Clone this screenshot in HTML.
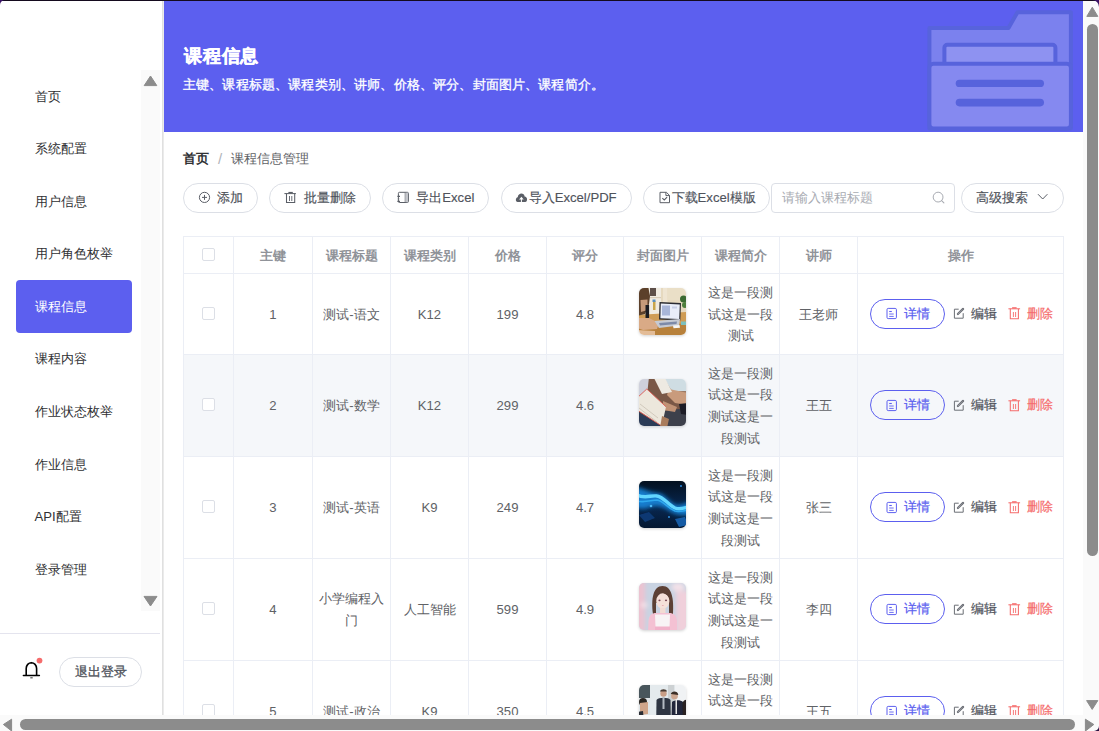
<!DOCTYPE html>
<html><head><meta charset="utf-8">
<style>
*{box-sizing:border-box;margin:0;padding:0}
html,body{width:1099px;height:731px;overflow:hidden;background:#fff}
body{font-family:"Liberation Sans",sans-serif;position:relative;color:#606266;font-size:13.125px}
.a{position:absolute}
.menu{left:34.5px;font-size:13.125px;color:#303133;line-height:20px;white-space:nowrap}
.btn{top:183px;height:30px;border:1px solid #dcdfe6;border-radius:15px;background:#fff;font-size:13.125px;color:#4f535b;white-space:nowrap;font-weight:500}
.btn svg{position:absolute}
.btn span{position:absolute;top:4px;line-height:20px;-webkit-text-stroke:0.15px #4f535b}
.hl{height:1px;background:#ebeef5}
.vl{width:1px;background:#ebeef5}
.c{display:flex;align-items:center;justify-content:center;text-align:center;font-size:13.125px;color:#606266;line-height:21.6px}
.th{font-weight:bold;color:#909399}
.cb{position:absolute;width:13px;height:13px;border:1px solid #dcdfe6;border-radius:2px;background:#fff}
.thumb{position:absolute;width:47px;height:47px;border-radius:5px;overflow:hidden;box-shadow:0 1px 3px rgba(0,0,0,.18)}
.dt{position:absolute;width:75px;height:30px;border:1px solid #5c5fef;border-radius:15px;color:#5c5fef;font-weight:500}
.ops{position:absolute;font-size:13.125px;line-height:20px;white-space:nowrap;-webkit-text-stroke:0.2px currentColor}
</style></head><body>

<div class="a" style="left:141px;top:70px;width:19px;height:541px;background:#fafafa"></div>
<svg class="a" style="left:141px;top:70px" width="19" height="541"><path d="M150.5,76 L156.8,85.6 L144.2,85.6Z" transform="translate(-141,-70)" fill="#8c8c8c" stroke="#8c8c8c" stroke-width="1" stroke-linejoin="round"/><path d="M144,596.4 L157,596.4 L150.5,606Z" transform="translate(-141,-70)" fill="#8c8c8c" stroke="#8c8c8c" stroke-width="1" stroke-linejoin="round"/></svg>
<div class="a" style="left:16px;top:280px;width:116px;height:53px;background:#5c5fef;border-radius:4px"></div>
<div class="a menu" style="top:86.50px">首页</div>
<div class="a menu" style="top:139.08px">系统配置</div>
<div class="a menu" style="top:191.66px">用户信息</div>
<div class="a menu" style="top:244.24px">用户角色枚举</div>
<div class="a menu" style="top:296.82px;color:#fff">课程信息</div>
<div class="a menu" style="top:349.40px">课程内容</div>
<div class="a menu" style="top:401.98px">作业状态枚举</div>
<div class="a menu" style="top:454.56px">作业信息</div>
<div class="a menu" style="top:507.14px">API配置</div>
<div class="a menu" style="top:559.72px">登录管理</div>
<div class="a" style="left:0;top:633px;width:160px;height:1px;background:#e4e4ee"></div>
<svg class="a" style="left:20px;top:656px" width="26" height="26" viewBox="20 656 26 26"><path d="M26.2,675.2 L26.2,668.5 A5,5.6 0 0 1 36.6,668.5 L36.6,675.2" fill="none" stroke="#000" stroke-width="1.6"/><path d="M23.4,675.6 L39.4,675.6" stroke="#000" stroke-width="1.5" stroke-linecap="round"/><path d="M30.2,663.4 L31.4,661.8 L32.6,663.4Z" fill="#000"/><rect x="30.3" y="677" width="2.4" height="1.5" fill="#777"/><circle cx="39.5" cy="660.6" r="2.9" fill="#f56c6c"/></svg>
<div class="a" style="left:59px;top:657px;width:83px;height:30px;border:1px solid #dcdfe6;border-radius:15px;font-size:13.125px;color:#4f535b;line-height:28px;text-align:center;-webkit-text-stroke:0.3px #4f535b">退出登录</div>
<div class="a" style="left:162px;top:0;width:1px;height:731px;background:#e0e0e0"></div>
<div class="a" style="left:163px;top:0;width:1px;height:731px;background:#ebebeb"></div>
<div class="a" style="left:164px;top:0;width:919px;height:132px;background:#5c5fef"></div>
<svg class="a" style="left:920px;top:0" width="163" height="132" viewBox="920 0 163 132">
<g stroke="#5763dc" stroke-width="4" stroke-linejoin="round">
<path d="M929.4,128.5 V28 H1008.5 L1017.5,12.2 H1070.9 V128.5 Z" fill="#7b81ee"/>
<rect x="944.4" y="44.8" width="111" height="22" rx="3" fill="#8e92f1"/>
<rect x="929.4" y="63.8" width="141.5" height="64.7" rx="4" fill="#8589f0"/>
</g>
<rect x="955.7" y="79.7" width="88.3" height="7.4" rx="3.7" fill="#5763dc"/>
<rect x="955.7" y="98.8" width="88.3" height="7.6" rx="3.8" fill="#5763dc"/>
</svg>
<div class="a" style="left:184px;top:43px;font-size:18.25px;letter-spacing:0.75px;font-weight:bold;color:#fff;line-height:26px;white-space:nowrap;-webkit-text-stroke:0.45px #fff">课程信息</div>
<div class="a" style="left:183px;top:75px;font-size:13.125px;letter-spacing:0.16px;color:#fff;-webkit-text-stroke:0.32px #fff;line-height:20px;white-space:nowrap">主键、课程标题、课程类别、讲师、价格、评分、封面图片、课程简介。</div>
<div class="a" style="left:183px;top:148px;font-size:13.125px;line-height:20px;white-space:nowrap"><b style="color:#303133">首页</b><span style="color:#b1b4ba;margin:0 8.5px 0 9px;font-size:15px;position:relative;top:0.5px">/</span><span>课程信息管理</span></div>
<div class="a btn" style="left:182.7px;width:75.2px"><span style="left:33.6px">添加</span></div>
<div class="a btn" style="left:269.2px;width:101.5px"><span style="left:33.5px">批量删除</span></div>
<div class="a btn" style="left:382.3px;width:106.4px"><span style="left:33.0px">导出Excel</span></div>
<div class="a btn" style="left:500.5px;width:131.1px"><span style="left:27.2px">导入Excel/PDF</span></div>
<div class="a btn" style="left:643.2px;width:127.1px"><span style="left:27.4px">下载Excel模版</span></div>
<div class="a" style="left:771px;top:183px;width:183.5px;height:29.5px;border:1px solid #dcdfe6;border-radius:4px;background:#fff"></div>
<div class="a" style="left:781.5px;top:187.6px;font-size:13.125px;line-height:20px;color:#a8abb2;white-space:nowrap">请输入课程标题</div>
<div class="a btn" style="left:961px;width:103px"><span style="left:14px">高级搜索</span></div>
<svg class="a" style="left:0;top:0" width="1099" height="731">
<g fill="none" stroke="#5a5e66">
<circle cx="204.5" cy="197.4" r="5.1" stroke-width="1"/>
<path d="M202,197.4h5M204.5,194.9v5" stroke-width="1"/>
<path d="M284.4,193.6h11.5" stroke-width="1"/>
<path d="M288.4,192.6h4.4" stroke-width="1.4"/>
<path d="M286.5,193.6v8.9h8.2v-8.9" stroke-width="1.05"/>
<path d="M289.5,196v5M291.8,196v5" stroke-width="0.9"/>
<rect x="398.4" y="192.3" width="10" height="10.2" rx="1" stroke-width="1"/>
<path d="M405.2,192.6v9.6" stroke-width="0.8"/>
<path d="M397.4,196.4h2.6M397.4,201.4h2.6" stroke-width="1.2"/>
<path d="M397.6,198.9h2" stroke-width="0.7" stroke-opacity=".6"/>
<path d="M660,192.3h6.4l3.1,3.1v7.3h-9.5Z" stroke-width="1" stroke-linejoin="round"/>
<path d="M665.9,192.4v3.2h3.5" stroke-width="1"/>
<path d="M662.3,198.2l2,1.8l2.8,-2.8" stroke-width="1.1"/>
<path d="M1038,194.2l4.7,4.8l4.7,-4.8" stroke-width="1"/>
</g>
<rect x="405.6" y="192.8" width="2.4" height="9.4" fill="#c4c6cb"/>
<path d="M517.6,202 C515.3,202 515.3,197.6 517.7,197.2 C518.2,192.6 524.2,192.4 524.6,196.4 C527.8,196.5 527.8,202 525.2,202Z" fill="#5a5e66"/>
<path d="M521.4,202.2v-3.4" stroke="#fff" stroke-width="1"/>
<path d="M521.4,196.8l-2.3,2.6h4.6Z" fill="#fff"/>
<circle cx="938.1" cy="197.1" r="4.9" fill="none" stroke="#a8abb2" stroke-width="1"/>
<path d="M941.6,200.6l2.3,2.2" stroke="#a8abb2" stroke-width="1.1" stroke-linecap="round"/>
</svg>
<div class="a" style="left:184px;top:355px;width:879px;height:101px;background:#f5f7fa"></div>
<div class="a hl" style="left:183px;top:236px;width:881px"></div>
<div class="a hl" style="left:183px;top:273px;width:881px"></div>
<div class="a hl" style="left:183px;top:354px;width:881px"></div>
<div class="a hl" style="left:183px;top:456px;width:881px"></div>
<div class="a hl" style="left:183px;top:558px;width:881px"></div>
<div class="a hl" style="left:183px;top:660px;width:881px"></div>
<div class="a hl" style="left:183px;top:762px;width:881px"></div>
<div class="a vl" style="left:183px;top:236px;height:500px"></div>
<div class="a vl" style="left:233px;top:236px;height:500px"></div>
<div class="a vl" style="left:312px;top:236px;height:500px"></div>
<div class="a vl" style="left:390px;top:236px;height:500px"></div>
<div class="a vl" style="left:468px;top:236px;height:500px"></div>
<div class="a vl" style="left:546px;top:236px;height:500px"></div>
<div class="a vl" style="left:623px;top:236px;height:500px"></div>
<div class="a vl" style="left:701px;top:236px;height:500px"></div>
<div class="a vl" style="left:779px;top:236px;height:500px"></div>
<div class="a vl" style="left:857px;top:236px;height:500px"></div>
<div class="a vl" style="left:1063px;top:236px;height:500px"></div>
<div class="cb" style="left:202px;top:248px"></div>
<div class="a c th" style="left:234px;top:238px;width:78px;height:36px">主键</div>
<div class="a c th" style="left:313px;top:238px;width:77px;height:36px">课程标题</div>
<div class="a c th" style="left:391px;top:238px;width:77px;height:36px">课程类别</div>
<div class="a c th" style="left:469px;top:238px;width:77px;height:36px">价格</div>
<div class="a c th" style="left:547px;top:238px;width:76px;height:36px">评分</div>
<div class="a c th" style="left:624px;top:238px;width:77px;height:36px">封面图片</div>
<div class="a c th" style="left:702px;top:238px;width:77px;height:36px">课程简介</div>
<div class="a c th" style="left:780px;top:238px;width:77px;height:36px">讲师</div>
<div class="a c th" style="left:858px;top:238px;width:205px;height:36px">操作</div>
<div class="cb" style="left:202px;top:306.9px"></div>
<div class="a c" style="left:234px;top:274.5px;width:78px;height:80px">1</div>
<div class="a c" style="left:313px;top:274.5px;width:77px;height:80px">测试-语文</div>
<div class="a c" style="left:391px;top:274.5px;width:77px;height:80px">K12</div>
<div class="a c" style="left:469px;top:274.5px;width:77px;height:80px">199</div>
<div class="a c" style="left:547px;top:274.5px;width:76px;height:80px">4.8</div>
<div class="a c" style="left:702px;top:274.5px;width:77px;height:80px">这是一段测<br>试这是一段<br>测试</div>
<div class="a c" style="left:780px;top:274.5px;width:77px;height:80px">王老师</div>
<div class="thumb" style="left:639px;top:287.8px"><svg width="47" height="47" viewBox="0 0 47 47"><defs><filter id="b1" x="-10%" y="-10%" width="120%" height="120%"><feGaussianBlur stdDeviation="0.6"/></filter></defs><g filter="url(#b1)">
<rect x="-2" y="-2" width="51" height="51" fill="#e6d9bf"/>
<rect x="10" y="-2" width="12" height="29" fill="#f0ebe1"/>
<rect x="11" y="-2" width="6" height="10" fill="#5d5048"/>
<rect x="10" y="9" width="12" height="1.2" fill="#d6cbb8"/>
<rect x="14" y="13" width="2.5" height="9" fill="#c9a54c"/>
<rect x="13.5" y="11.5" width="3" height="2.5" fill="#5a8fc0"/>
<rect x="24" y="-2" width="4.5" height="24" fill="#efe5d2"/>
<rect x="29" y="-2" width="18" height="14" fill="#eadfc7"/>
<path d="M-2,27 L47,24 L49,49 L-2,49Z" fill="#cf9c55"/>
<path d="M-2,40 L49,35 L49,49 L-2,49Z" fill="#b8813b"/>
<path d="M-2,-2 L9,-2 L11,8 L10,16 L6,26 L-2,28Z" fill="#5b3f2b"/>
<path d="M1.5,12 L8.5,11.5 L8.5,22 L2,24Z" fill="#c69a7a"/>
<rect x="6.5" y="17" width="3.6" height="13" fill="#1f1f22"/>
<path d="M-2,30 L10,30 L20,35 L18,41 L4,42 L-2,40Z" fill="#d9aa86"/>
<path d="M-2,42 L16,43 L16,49 L-2,49Z" fill="#e3bc97"/>
<path d="M20.5,14 L42,15 L41.3,32.5 L20,31.5Z" fill="#2c2c30"/>
<path d="M21.8,15.5 L40.8,16.4 L40.2,31 L21.4,30.2Z" fill="#e9edf8"/>
<rect x="23" y="17.5" width="8" height="10" fill="#a9b6d8"/>
<rect x="33" y="18.5" width="5" height="2" fill="#c9cfe6"/>
<path d="M15.5,33 L41,31 L40,37.5 L20,40Z" fill="#c6cad3"/>
<path d="M20,35 L38,33.5 L37.5,36 L21,37.5Z" fill="#7d8aa8"/>
<path d="M34,37.5 L40.5,37 L41,39.8 L34.5,40.2Z" fill="#f6f6f6"/>
<circle cx="44.5" cy="11" r="3.5" fill="#3b6a33"/><circle cx="46" cy="17" r="3" fill="#4d7f3d"/>
<rect x="42" y="33.5" width="7" height="3.5" fill="#7cc0bd"/>
</g></svg></div>
<div class="dt" style="left:870px;top:298.5px"><span class="ops" style="left:33px;top:4px">详情</span></div>
<span class="a ops" style="left:971px;top:303.5px;color:#4f535b">编辑</span>
<span class="a ops" style="left:1026.5px;top:303.5px;color:#f56c6c">删除</span>
<svg class="a" style="left:880px;top:304.25px" width="150" height="20" viewBox="880 304 150 20">
<rect x="887" y="308.4" width="9.4" height="10.2" rx="1.2" fill="none" stroke="#5c5fef" stroke-width="1"/>
<path d="M889.2,311.5h2.6" stroke="#5c5fef" stroke-width="1.1"/>
<path d="M889.2,314h4.5M889.2,316.4h4.5" stroke="#5c5fef" stroke-width="0.9"/>
<path d="M958.7,309.2h-4.3v9h8.8v-5" fill="none" stroke="#6b6e75" stroke-width="1"/>
<path d="M957.9,314l5.2,-5.1" stroke="#6b6e75" stroke-width="2.2" stroke-linecap="round"/>
<path d="M958.3,313.6l4.4,-4.3" stroke="#fff" stroke-width="0.6" stroke-dasharray="0.8 0.8"/>
<path d="M1008.4,308.8h11.7" stroke="#f56c6c" stroke-width="1"/>
<path d="M1012.1,307.9h4.5" stroke="#f56c6c" stroke-width="1.4"/>
<path d="M1010.3,308.8v10h8.1v-10" fill="none" stroke="#f56c6c" stroke-width="1.05"/>
<path d="M1013.4,312v5M1015.6,312v5" stroke="#f56c6c" stroke-width="0.9"/>
</svg>
<div class="cb" style="left:202px;top:398.4px"></div>
<div class="a c" style="left:234px;top:355.5px;width:78px;height:101px">2</div>
<div class="a c" style="left:313px;top:355.5px;width:77px;height:101px">测试-数学</div>
<div class="a c" style="left:391px;top:355.5px;width:77px;height:101px">K12</div>
<div class="a c" style="left:469px;top:355.5px;width:77px;height:101px">299</div>
<div class="a c" style="left:547px;top:355.5px;width:76px;height:101px">4.6</div>
<div class="a c" style="left:702px;top:355.5px;width:77px;height:101px">这是一段测<br>试这是一段<br>测试这是一<br>段测试</div>
<div class="a c" style="left:780px;top:355.5px;width:77px;height:101px">王五</div>
<div class="thumb" style="left:639px;top:379.2px"><svg width="47" height="47" viewBox="0 0 47 47"><defs><filter id="b2" x="-10%" y="-10%" width="120%" height="120%"><feGaussianBlur stdDeviation="0.6"/></filter></defs><g filter="url(#b2)">
<rect x="-2" y="-2" width="51" height="51" fill="#9a7a66"/>
<rect x="-2" y="-2" width="14" height="24" fill="#cfd1dc"/>
<path d="M24,-2 L49,-2 L49,12 L33,12Z" fill="#cfdde3"/>
<path d="M10,-2 L16,-2 L30,16 L40,20 L49,20 L49,30 L24,32 L8,16Z" fill="#7a5847"/>
<path d="M30,10 L49,14 L49,26 L36,24 L28,16Z" fill="#c99b7b"/>
<path d="M15,-1 L26,-1 L33,13 L23,15Z" fill="#eeeae2"/>
<path d="M-2,26 L14,33 L49,29 L49,49 L-2,49Z" fill="#3c3f4b"/>
<path d="M-2,33 L22,46 L22,49 L-2,49Z" fill="#2c3b57"/>
<path d="M40,25 L49,24 L49,36 L42,35Z" fill="#1e1f25"/>
<path d="M24,22 L38,28 L36,33 L24,31Z" fill="#c09274"/>
<path d="M-2,19 L7.8,10 L27,27.8 L22.8,47 L-2,31Z" fill="#ece7dc"/>
<path d="M-2,19 L7.8,10 L27,27.8" fill="none" stroke="#dd5a52" stroke-width="0.9"/>
<path d="M-2,31 L22.8,47" fill="none" stroke="#dd5a52" stroke-width="0.9"/>
<path d="M1,25 L19,39 M0,29 L18,43" stroke="#c4bcae" stroke-width="0.7"/>
<path d="M23,37 L30,40 L28,49 L21,49Z" fill="#a97b5c"/>
</g></svg></div>
<div class="dt" style="left:870px;top:390.0px"><span class="ops" style="left:33px;top:4px">详情</span></div>
<span class="a ops" style="left:971px;top:395.0px;color:#4f535b">编辑</span>
<span class="a ops" style="left:1026.5px;top:395.0px;color:#f56c6c">删除</span>
<svg class="a" style="left:880px;top:395.75px" width="150" height="20" viewBox="880 304 150 20">
<rect x="887" y="308.4" width="9.4" height="10.2" rx="1.2" fill="none" stroke="#5c5fef" stroke-width="1"/>
<path d="M889.2,311.5h2.6" stroke="#5c5fef" stroke-width="1.1"/>
<path d="M889.2,314h4.5M889.2,316.4h4.5" stroke="#5c5fef" stroke-width="0.9"/>
<path d="M958.7,309.2h-4.3v9h8.8v-5" fill="none" stroke="#6b6e75" stroke-width="1"/>
<path d="M957.9,314l5.2,-5.1" stroke="#6b6e75" stroke-width="2.2" stroke-linecap="round"/>
<path d="M958.3,313.6l4.4,-4.3" stroke="#fff" stroke-width="0.6" stroke-dasharray="0.8 0.8"/>
<path d="M1008.4,308.8h11.7" stroke="#f56c6c" stroke-width="1"/>
<path d="M1012.1,307.9h4.5" stroke="#f56c6c" stroke-width="1.4"/>
<path d="M1010.3,308.8v10h8.1v-10" fill="none" stroke="#f56c6c" stroke-width="1.05"/>
<path d="M1013.4,312v5M1015.6,312v5" stroke="#f56c6c" stroke-width="0.9"/>
</svg>
<div class="cb" style="left:202px;top:500.4px"></div>
<div class="a c" style="left:234px;top:457.5px;width:78px;height:101px">3</div>
<div class="a c" style="left:313px;top:457.5px;width:77px;height:101px">测试-英语</div>
<div class="a c" style="left:391px;top:457.5px;width:77px;height:101px">K9</div>
<div class="a c" style="left:469px;top:457.5px;width:77px;height:101px">249</div>
<div class="a c" style="left:547px;top:457.5px;width:76px;height:101px">4.7</div>
<div class="a c" style="left:702px;top:457.5px;width:77px;height:101px">这是一段测<br>试这是一段<br>测试这是一<br>段测试</div>
<div class="a c" style="left:780px;top:457.5px;width:77px;height:101px">张三</div>
<div class="thumb" style="left:639px;top:481.2px"><svg width="47" height="47" viewBox="0 0 47 47"><defs><filter id="b3" x="-30%" y="-30%" width="160%" height="160%"><feGaussianBlur stdDeviation="2"/></filter><filter id="b3s" x="-10%" y="-10%" width="120%" height="120%"><feGaussianBlur stdDeviation="0.7"/></filter><linearGradient id="g3" x1="0" y1="0" x2="0" y2="1"><stop offset="0" stop-color="#03101f"/><stop offset=".55" stop-color="#082750"/><stop offset="1" stop-color="#041730"/></linearGradient></defs>
<rect width="47" height="47" fill="url(#g3)"/>
<g filter="url(#b3)"><path d="M-4,6 C6,8 12,12 18,12 C26,12 30,22 37,24 C42,25 46,22 51,21 L51,34 C43,35 36,34 29,29 C22,24 16,24 8,27 C3,29 -1,27 -4,26Z" fill="#1886dc" opacity=".9"/></g>
<g filter="url(#b3s)"><path d="M-2,14 C6,18 12,14 18,15 C25,16 29,24 36,27 C41,29 45,27 49,26" fill="none" stroke="#62d6ff" stroke-width="3.4"/>
<path d="M-2,20 C6,22 12,19 18,19 C25,20 28,27 36,30 C41,31 45,30 49,29" fill="none" stroke="#2fa8ee" stroke-width="1.6"/>
<path d="M0,34 L10,31 L16,37 L6,41Z" fill="#0d3b78" opacity=".9"/><path d="M36,38 L46,36 L49,44 L40,46Z" fill="#1a63b0" opacity=".9"/>
<circle cx="42" cy="5" r="1" fill="#2a8ae0"/><circle cx="12" cy="25" r="1.3" fill="#4ab7f4"/><circle cx="30" cy="36" r="1" fill="#2f8fe0"/></g>
</svg></div>
<div class="dt" style="left:870px;top:492.0px"><span class="ops" style="left:33px;top:4px">详情</span></div>
<span class="a ops" style="left:971px;top:497.0px;color:#4f535b">编辑</span>
<span class="a ops" style="left:1026.5px;top:497.0px;color:#f56c6c">删除</span>
<svg class="a" style="left:880px;top:497.75px" width="150" height="20" viewBox="880 304 150 20">
<rect x="887" y="308.4" width="9.4" height="10.2" rx="1.2" fill="none" stroke="#5c5fef" stroke-width="1"/>
<path d="M889.2,311.5h2.6" stroke="#5c5fef" stroke-width="1.1"/>
<path d="M889.2,314h4.5M889.2,316.4h4.5" stroke="#5c5fef" stroke-width="0.9"/>
<path d="M958.7,309.2h-4.3v9h8.8v-5" fill="none" stroke="#6b6e75" stroke-width="1"/>
<path d="M957.9,314l5.2,-5.1" stroke="#6b6e75" stroke-width="2.2" stroke-linecap="round"/>
<path d="M958.3,313.6l4.4,-4.3" stroke="#fff" stroke-width="0.6" stroke-dasharray="0.8 0.8"/>
<path d="M1008.4,308.8h11.7" stroke="#f56c6c" stroke-width="1"/>
<path d="M1012.1,307.9h4.5" stroke="#f56c6c" stroke-width="1.4"/>
<path d="M1010.3,308.8v10h8.1v-10" fill="none" stroke="#f56c6c" stroke-width="1.05"/>
<path d="M1013.4,312v5M1015.6,312v5" stroke="#f56c6c" stroke-width="0.9"/>
</svg>
<div class="cb" style="left:202px;top:602.4px"></div>
<div class="a c" style="left:234px;top:559.5px;width:78px;height:101px">4</div>
<div class="a c" style="left:313px;top:559.5px;width:77px;height:101px">小学编程入<br>门</div>
<div class="a c" style="left:391px;top:559.5px;width:77px;height:101px">人工智能</div>
<div class="a c" style="left:469px;top:559.5px;width:77px;height:101px">599</div>
<div class="a c" style="left:547px;top:559.5px;width:76px;height:101px">4.9</div>
<div class="a c" style="left:702px;top:559.5px;width:77px;height:101px">这是一段测<br>试这是一段<br>测试这是一<br>段测试</div>
<div class="a c" style="left:780px;top:559.5px;width:77px;height:101px">李四</div>
<div class="thumb" style="left:639px;top:583.2px"><svg width="47" height="47" viewBox="0 0 47 47"><defs><filter id="b4" x="-10%" y="-10%" width="120%" height="120%"><feGaussianBlur stdDeviation="0.5"/></filter><filter id="b4b" x="-50%" y="-50%" width="200%" height="200%"><feGaussianBlur stdDeviation="2.2"/></filter></defs>
<rect width="47" height="47" fill="#c9d3e2"/>
<g filter="url(#b4b)"><rect x="-4" y="-4" width="10" height="55" fill="#ecc3d1"/><rect x="37" y="8" width="14" height="43" fill="#f0d0db"/><ellipse cx="39" cy="4" rx="7" ry="4" fill="#f4e2e9"/><ellipse cx="5" cy="22" rx="3.5" ry="2.5" fill="#f6e3ea"/></g>
<g filter="url(#b4)">
<path d="M14,31 C12,16 14,3 23.5,3 C33,3 35,16 34,31 L30,31 L30,20 L17,20 L17,31Z" fill="#5c4036"/>
<ellipse cx="23.8" cy="18" rx="6.6" ry="7.8" fill="#f5e0d9"/>
<path d="M16.8,15 C17,6 30.5,6 30.8,15 C28,11 24,10 22,9 C20,12 18,13 16.8,15Z" fill="#5c4036"/>
<ellipse cx="20.5" cy="17.3" rx="1.1" ry="0.9" fill="#7b4a55"/><ellipse cx="27" cy="17.3" rx="1.1" ry="0.9" fill="#7b4a55"/>
<ellipse cx="23.8" cy="22.5" rx="1" ry="0.5" fill="#e9a9b3"/>
<rect x="21" y="25" width="5.5" height="6" fill="#f2dbd3"/>
<path d="M9,49 L9.5,38 C10,32 13,30 17,30 L30.5,30 C34,30 37.5,32 38,38 L38,49Z" fill="#f4c1d3"/>
<path d="M16,31.5 L31,31.5 L30.5,44 L16.5,44Z" fill="#f8f3f5"/>
<rect x="16" y="43.5" width="15" height="6" fill="#f1b2ca"/>
</g></svg></div>
<div class="dt" style="left:870px;top:594.0px"><span class="ops" style="left:33px;top:4px">详情</span></div>
<span class="a ops" style="left:971px;top:599.0px;color:#4f535b">编辑</span>
<span class="a ops" style="left:1026.5px;top:599.0px;color:#f56c6c">删除</span>
<svg class="a" style="left:880px;top:599.75px" width="150" height="20" viewBox="880 304 150 20">
<rect x="887" y="308.4" width="9.4" height="10.2" rx="1.2" fill="none" stroke="#5c5fef" stroke-width="1"/>
<path d="M889.2,311.5h2.6" stroke="#5c5fef" stroke-width="1.1"/>
<path d="M889.2,314h4.5M889.2,316.4h4.5" stroke="#5c5fef" stroke-width="0.9"/>
<path d="M958.7,309.2h-4.3v9h8.8v-5" fill="none" stroke="#6b6e75" stroke-width="1"/>
<path d="M957.9,314l5.2,-5.1" stroke="#6b6e75" stroke-width="2.2" stroke-linecap="round"/>
<path d="M958.3,313.6l4.4,-4.3" stroke="#fff" stroke-width="0.6" stroke-dasharray="0.8 0.8"/>
<path d="M1008.4,308.8h11.7" stroke="#f56c6c" stroke-width="1"/>
<path d="M1012.1,307.9h4.5" stroke="#f56c6c" stroke-width="1.4"/>
<path d="M1010.3,308.8v10h8.1v-10" fill="none" stroke="#f56c6c" stroke-width="1.05"/>
<path d="M1013.4,312v5M1015.6,312v5" stroke="#f56c6c" stroke-width="0.9"/>
</svg>
<div class="cb" style="left:202px;top:704.4px"></div>
<div class="a c" style="left:234px;top:661.5px;width:78px;height:101px">5</div>
<div class="a c" style="left:313px;top:661.5px;width:77px;height:101px">测试-政治</div>
<div class="a c" style="left:391px;top:661.5px;width:77px;height:101px">K9</div>
<div class="a c" style="left:469px;top:661.5px;width:77px;height:101px">350</div>
<div class="a c" style="left:547px;top:661.5px;width:76px;height:101px">4.5</div>
<div class="a c" style="left:702px;top:661.5px;width:77px;height:101px">这是一段测<br>试这是一段<br>测试这是一<br>段测试</div>
<div class="a c" style="left:780px;top:661.5px;width:77px;height:101px">王五</div>
<div class="thumb" style="left:639px;top:685.2px"><svg width="47" height="47" viewBox="0 0 47 47"><defs><filter id="b5" x="-10%" y="-10%" width="120%" height="120%"><feGaussianBlur stdDeviation="0.7"/></filter></defs><g filter="url(#b5)">
<rect x="-2" y="-2" width="51" height="51" fill="#dfe5e8"/>
<rect x="-2" y="-2" width="13" height="15" fill="#4a575c"/>
<rect x="11" y="-2" width="18" height="40" fill="#e4eaed"/>
<rect x="29" y="-2" width="6" height="40" fill="#cdd1d3"/>
<rect x="36" y="-2" width="13" height="20" fill="#f0f2f4"/>
<circle cx="4" cy="17" r="4" fill="#2c2622"/><path d="M1,18 L9,17 L9,29 L1,30Z" fill="#cfa58a"/>
<path d="M-2,27 L4,26 L6,49 L-2,49Z" fill="#2a2e36"/>
<circle cx="24.5" cy="8.5" r="3.2" fill="#c99e86"/><path d="M21,6.5 C21.5,3.5 27.5,3.5 28,6.5Z" fill="#4a3a30"/>
<path d="M17,49 L17.5,15 C19,12 30,12 31.5,15 L32,49Z" fill="#2d3542"/>
<path d="M23.5,12.5 L25.5,12.5 L25.5,24 L23.5,24Z" fill="#b3bac2"/>
<circle cx="35.5" cy="11" r="3.4" fill="#cca690"/><path d="M31.8,9 C32.5,5.5 39,5.5 39.3,10Z" fill="#3b2e26"/>
<path d="M32,49 L33,17 C35,14.5 42,14.5 44,17 L45,49Z" fill="#20263a"/>
<path d="M36.5,15 L38,15 L38,29 L36.5,29Z" fill="#e6e6e6"/>
<path d="M43.5,18 C45,14 49,14 49,17 L49,49 L44,49Z" fill="#2a2420"/>
</g></svg></div>
<div class="dt" style="left:870px;top:696.0px"><span class="ops" style="left:33px;top:4px">详情</span></div>
<span class="a ops" style="left:971px;top:701.0px;color:#4f535b">编辑</span>
<span class="a ops" style="left:1026.5px;top:701.0px;color:#f56c6c">删除</span>
<svg class="a" style="left:880px;top:701.75px" width="150" height="20" viewBox="880 304 150 20">
<rect x="887" y="308.4" width="9.4" height="10.2" rx="1.2" fill="none" stroke="#5c5fef" stroke-width="1"/>
<path d="M889.2,311.5h2.6" stroke="#5c5fef" stroke-width="1.1"/>
<path d="M889.2,314h4.5M889.2,316.4h4.5" stroke="#5c5fef" stroke-width="0.9"/>
<path d="M958.7,309.2h-4.3v9h8.8v-5" fill="none" stroke="#6b6e75" stroke-width="1"/>
<path d="M957.9,314l5.2,-5.1" stroke="#6b6e75" stroke-width="2.2" stroke-linecap="round"/>
<path d="M958.3,313.6l4.4,-4.3" stroke="#fff" stroke-width="0.6" stroke-dasharray="0.8 0.8"/>
<path d="M1008.4,308.8h11.7" stroke="#f56c6c" stroke-width="1"/>
<path d="M1012.1,307.9h4.5" stroke="#f56c6c" stroke-width="1.4"/>
<path d="M1010.3,308.8v10h8.1v-10" fill="none" stroke="#f56c6c" stroke-width="1.05"/>
<path d="M1013.4,312v5M1015.6,312v5" stroke="#f56c6c" stroke-width="0.9"/>
</svg>
<div class="a" style="left:0;top:715px;width:1099px;height:16px;background:#fafafa"></div>
<div class="a" style="left:1083px;top:0;width:16px;height:731px;background:#fafafa"></div>
<div class="a" style="left:1087px;top:24px;width:11px;height:532px;border-radius:5.5px;background:#8c8c8c"></div>
<div class="a" style="left:20px;top:719px;width:1055px;height:11px;border-radius:5.5px;background:#8c8c8c"></div>
<svg class="a" style="left:0;top:0" width="1099" height="731"><path d="M1092.3,7.2L1097.8,16.4H1086.8Z" fill="#8c8c8c" stroke="#8c8c8c" stroke-linejoin="round"/><path d="M1086.6,700.6H1097.8L1092.2,709.4Z" fill="#8c8c8c" stroke="#8c8c8c" stroke-linejoin="round"/><path d="M11.6,719.2V731L3.4,724.5Z" fill="#8c8c8c" stroke="#8c8c8c" stroke-linejoin="round"/><path d="M1085.4,719.2V731L1093.8,724.5Z" fill="#8c8c8c" stroke="#8c8c8c" stroke-linejoin="round"/></svg>
<div class="a" style="left:0;top:0;width:1099px;height:1px;background:#140a1e"></div>
<svg class="a" style="left:0;top:0" width="1099" height="731"><path d="M0,0H5A5,5 0 0 0 0,5Z" fill="#3b1466"/><path d="M1092,0H1099V7A7,7 0 0 0 1092,0Z" fill="#3b1466"/><path d="M1099,726V731H1094A5,5 0 0 0 1099,726Z" fill="#2a1040"/></svg>
</body></html>
